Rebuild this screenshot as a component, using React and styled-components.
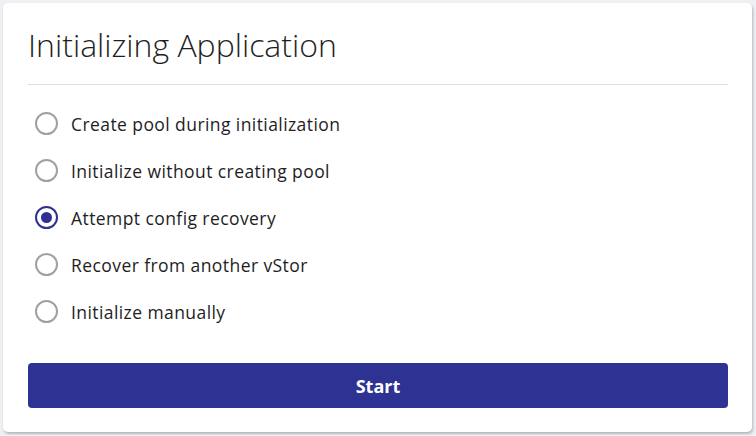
import { useState } from "react";
import styled, { createGlobalStyle } from "styled-components";

const GlobalStyle = createGlobalStyle`
  body {
    margin: 0;
    background: #eff0f3;
    font-family: "Open Sans", "Liberation Sans", sans-serif;
  }
`;

const Page = styled.div`
  padding: 3px;
`;

const Card = styled.div`
  width: 749px;
  height: 429px;
  box-sizing: border-box;
  background: #fff;
  border-radius: 5px;
  box-shadow: 1px 2px 3px rgba(0, 0, 0, 0.25);
  padding: 22px 24px 24px 25px;
  display: flex;
  flex-direction: column;
`;

const Title = styled.h1`
  margin: 0;
  font-size: 32px;
  line-height: 40px;
  font-weight: 300;
  color: #1f1f1f;
`;

const Divider = styled.hr`
  margin: 19px 0 0;
  border: 0;
  border-top: 1px solid #e0e0e0;
`;

const OptionList = styled.div`
  display: flex;
  flex-direction: column;
  margin-top: 15px;
`;

const Option = styled.label`
  display: flex;
  align-items: center;
  gap: 13px;
  height: 47px;
  padding-left: 7px;
  font-size: 17.5px;
  color: #1e1e1e;
  letter-spacing: 0.42px;
  cursor: pointer;
`;

const Radio = styled.span`
  width: 23px;
  height: 23px;
  flex-shrink: 0;
  box-sizing: border-box;
  border-radius: 50%;
  border: 2px solid ${({ $checked }) => ($checked ? "#2e3192" : "#a0a0a0")};
  display: flex;
  align-items: center;
  justify-content: center;
  &::after {
    content: "";
    width: 11px;
    height: 11px;
    border-radius: 50%;
    background: #2e3192;
    display: ${({ $checked }) => ($checked ? "block" : "none")};
  }
`;

const StartButton = styled.button`
  margin-top: auto;
  height: 45px;
  border: 0;
  border-radius: 4px;
  background: #2e3293;
  color: #fff;
  font-family: inherit;
  font-size: 18px;
  font-weight: 700;
  cursor: pointer;
`;

const options = [
  "Create pool during initialization",
  "Initialize without creating pool",
  "Attempt config recovery",
  "Recover from another vStor",
  "Initialize manually",
];

export default function App() {
  const [selected, setSelected] = useState(2);
  return (
    <>
      <GlobalStyle />
      <Page>
        <Card>
          <Title>Initializing Application</Title>
          <Divider />
          <OptionList>
            {options.map((text, i) => (
              <Option key={text} onClick={() => setSelected(i)}>
                <Radio $checked={selected === i} />
                {text}
              </Option>
            ))}
          </OptionList>
          <StartButton>Start</StartButton>
        </Card>
      </Page>
    </>
  );
}
